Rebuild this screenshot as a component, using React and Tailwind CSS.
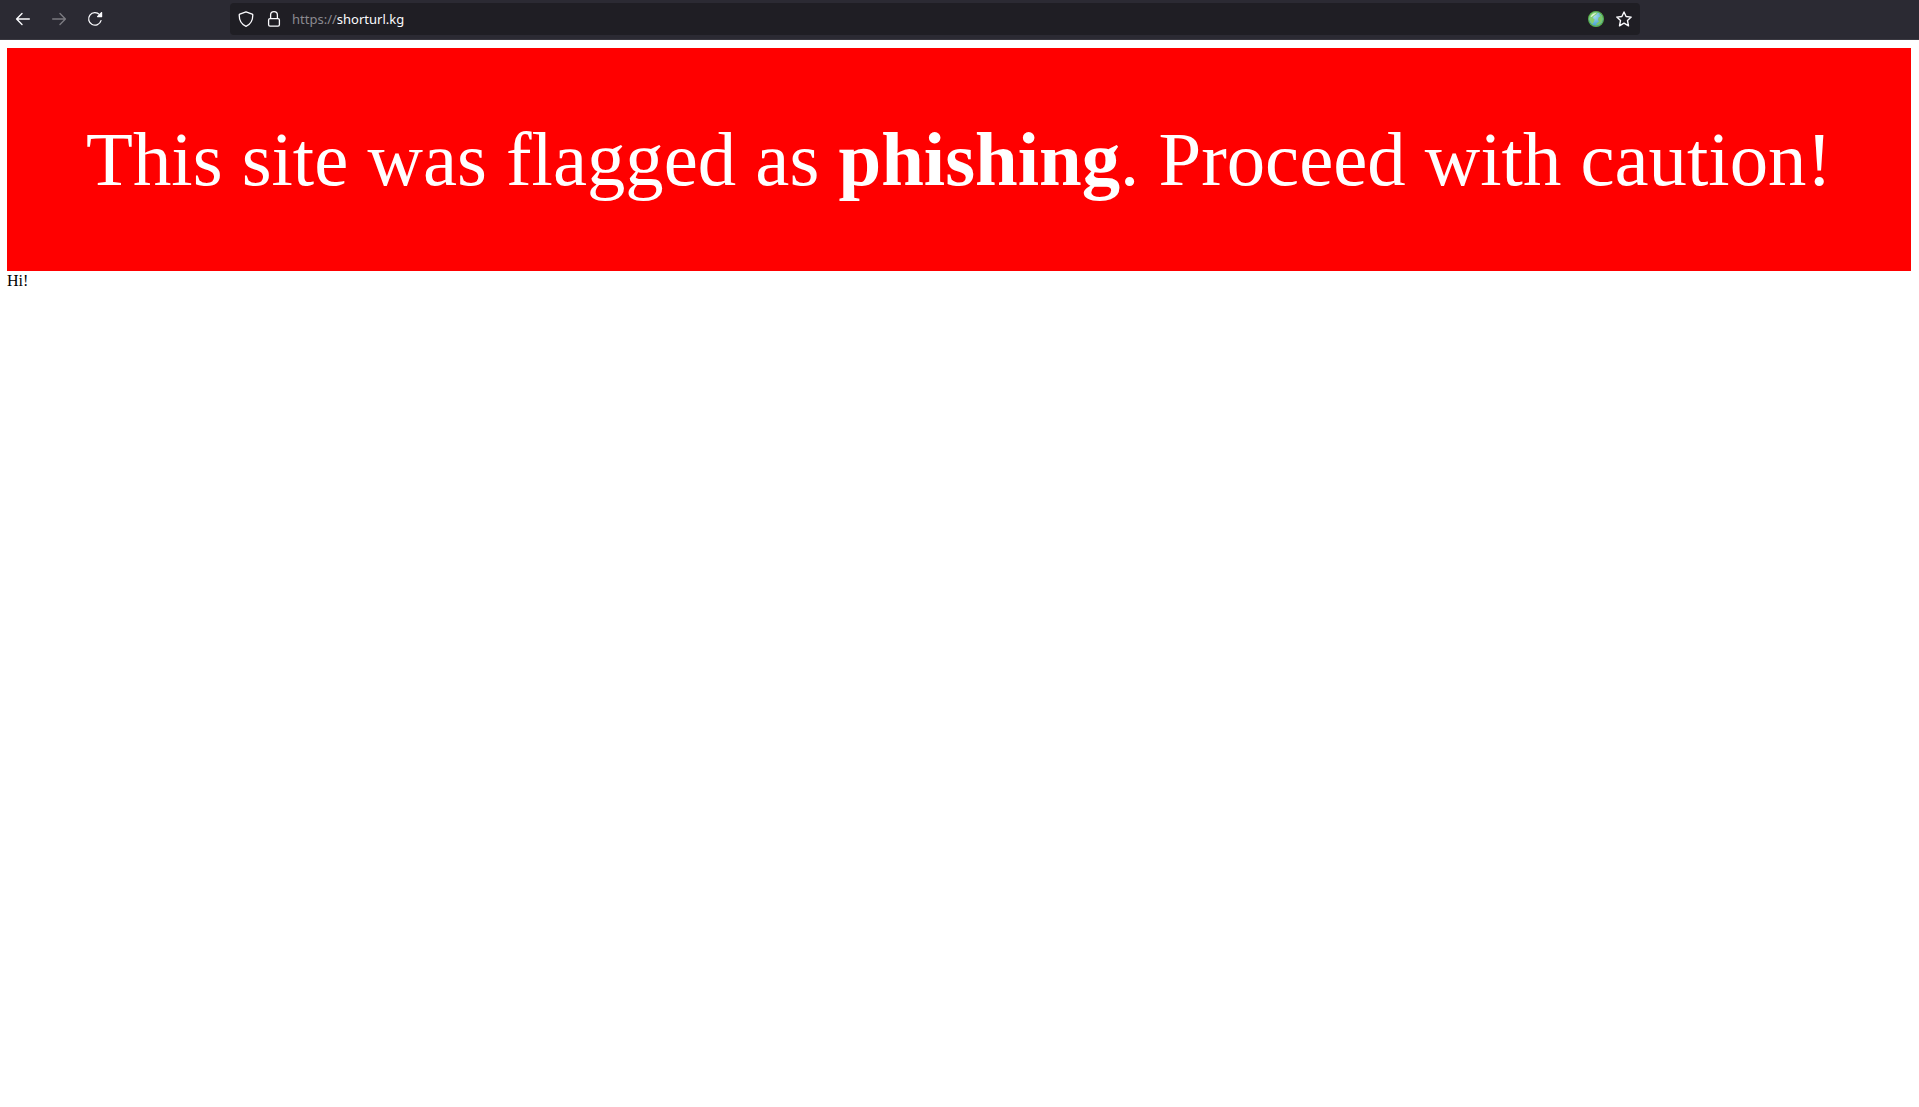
function BackIcon() {
  return (
    <svg width="16" height="16" viewBox="0 0 16 16" fill="none" stroke="currentColor" strokeWidth="1.4" strokeLinecap="round" strokeLinejoin="round" aria-hidden="true">
      <path d="M14.3 8H1.8M7 2.6 1.6 8 7 13.4" />
    </svg>
  );
}

function ForwardIcon() {
  return (
    <svg width="16" height="16" viewBox="0 0 16 16" fill="none" stroke="currentColor" strokeWidth="1.4" strokeLinecap="round" strokeLinejoin="round" aria-hidden="true">
      <path d="M1.7 8h12.5M9 2.6 14.4 8 9 13.4" />
    </svg>
  );
}

function ReloadIcon() {
  return (
    <svg width="16" height="16" viewBox="0 0 16 16" fill="none" aria-hidden="true">
      <path d="M14 9.6A6.3 6.3 0 1 1 12.6 3.6" stroke="currentColor" strokeWidth="1.3" strokeLinecap="round" />
      <path d="M14.3 1.1c.4-.4.9-.1.9.4v4.2c0 .3-.2.5-.5.5h-4.2c-.5 0-.7-.6-.4-.9z" fill="currentColor" />
    </svg>
  );
}

function ShieldIcon() {
  return (
    <svg width="16" height="16" viewBox="0 0 16 16" fill="none" stroke="currentColor" strokeWidth="1.3" strokeLinejoin="round" aria-hidden="true">
      <path d="M8 .8 14.2 3.2c.4.2.6.5.6.9C14.8 9.5 12.6 13.5 8 15.3 3.4 13.5 1.2 9.5 1.2 4.1c0-.4.2-.7.6-.9z" />
    </svg>
  );
}

function LockIcon() {
  return (
    <svg width="16" height="16" viewBox="0 0 16 16" fill="none" stroke="currentColor" strokeWidth="1.3" aria-hidden="true">
      <rect x="2.6" y="7.6" width="10.8" height="7.6" rx="1.4" />
      <path d="M4.6 7.6V4.1a3.4 3.4 0 0 1 6.8 0v3.5" />
    </svg>
  );
}

function GlobeIcon() {
  return (
    <svg width="16" height="16" viewBox="0 0 16 16" aria-hidden="true">
      <defs>
        <radialGradient id="sea" cx="0.4" cy="0.3" r="0.8">
          <stop offset="0" stopColor="#a9dcea" />
          <stop offset="0.6" stopColor="#5fb0dc" />
          <stop offset="1" stopColor="#3b8fc0" />
        </radialGradient>
      </defs>
      <circle cx="8" cy="8" r="7.4" fill="url(#sea)" stroke="#58b046" strokeWidth="1.2" />
      <path d="M1.4 6C2 3.2 4.5 1.3 8 1.3l1.6.9-1.4 1.6L6 5 4.6 7l2 1.2L6 10.600 4.500 13C2.500 11.500 1 9 1.400 6z" fill="#86d070" />
      <path d="M11 2.500 13.800 5l.8 3-1 3.500-2.500 2-3.500.800L9 12l2-1.500L10 9l.5-2.500 1.800-1z" fill="#7cc766" />
      <path d="M2.500 5.500C4 3 6 2 8.500 2L6 4 3.500 6z" fill="#e2f7da" />
    </svg>
  );
}

function StarIcon() {
  return (
    <svg width="16" height="16" viewBox="0 0 16 16" fill="none" stroke="currentColor" strokeWidth="1.4" strokeLinejoin="round" aria-hidden="true">
      <path d="M8 1 10.1 5.500 15.200 6.100 11.500 9.600 12.500 14.800 8 12.200 3.500 14.800 4.500 9.600.8 6.100 5.900 5.500z" />
    </svg>
  );
}

function Toolbar() {
  return (
    <header className="flex items-center border-b border-[#3a3941] bg-[#2b2a33] pb-1 pt-[3px] text-[#fbfbfe]">
      <nav aria-label="History" className="flex flex-none gap-5 pl-[15px]">
        <button type="button" aria-label="Back"><BackIcon /></button>
        <button type="button" aria-label="Forward" disabled className="text-[#7b7a80]"><ForwardIcon /></button>
        <button type="button" aria-label="Reload"><ReloadIcon /></button>
      </nav>
      <form className="ml-[127px] mr-[279px] flex h-8 min-w-0 flex-1 items-center rounded bg-[#1f1e24] px-2">
        <button type="button" aria-label="Tracking protection"><ShieldIcon /></button>
        <button type="button" aria-label="Site security" className="ml-3"><LockIcon /></button>
        <label htmlFor="address" className="ml-[10px] font-['Noto_Sans',sans-serif] text-[13px] leading-5 text-[#8b8a90]">https://</label>
        <input
          id="address"
          type="text"
          defaultValue="shorturl.kg"
          spellCheck="false"
          className="min-w-0 flex-1 bg-transparent font-['Noto_Sans',sans-serif] text-[13px] leading-5 outline-none"
        />
        <button type="button" aria-label="Site information"><GlobeIcon /></button>
        <button type="button" aria-label="Bookmark this page" className="ml-3"><StarIcon /></button>
      </form>
    </header>
  );
}

export default function App() {
  return (
    <div className="min-h-screen bg-white font-['Liberation_Serif',serif] text-black">
      <Toolbar />
      <main className="pl-[7px] pr-2 pt-2">
        <div role="alert" className="bg-[#ff0000] px-8 py-16 text-center text-[4vw] leading-[95px] text-white">
          This site was flagged as <b>phishing</b>. Proceed with caution!
        </div>
        <p className="text-base leading-5">Hi!</p>
      </main>
    </div>
  );
}
